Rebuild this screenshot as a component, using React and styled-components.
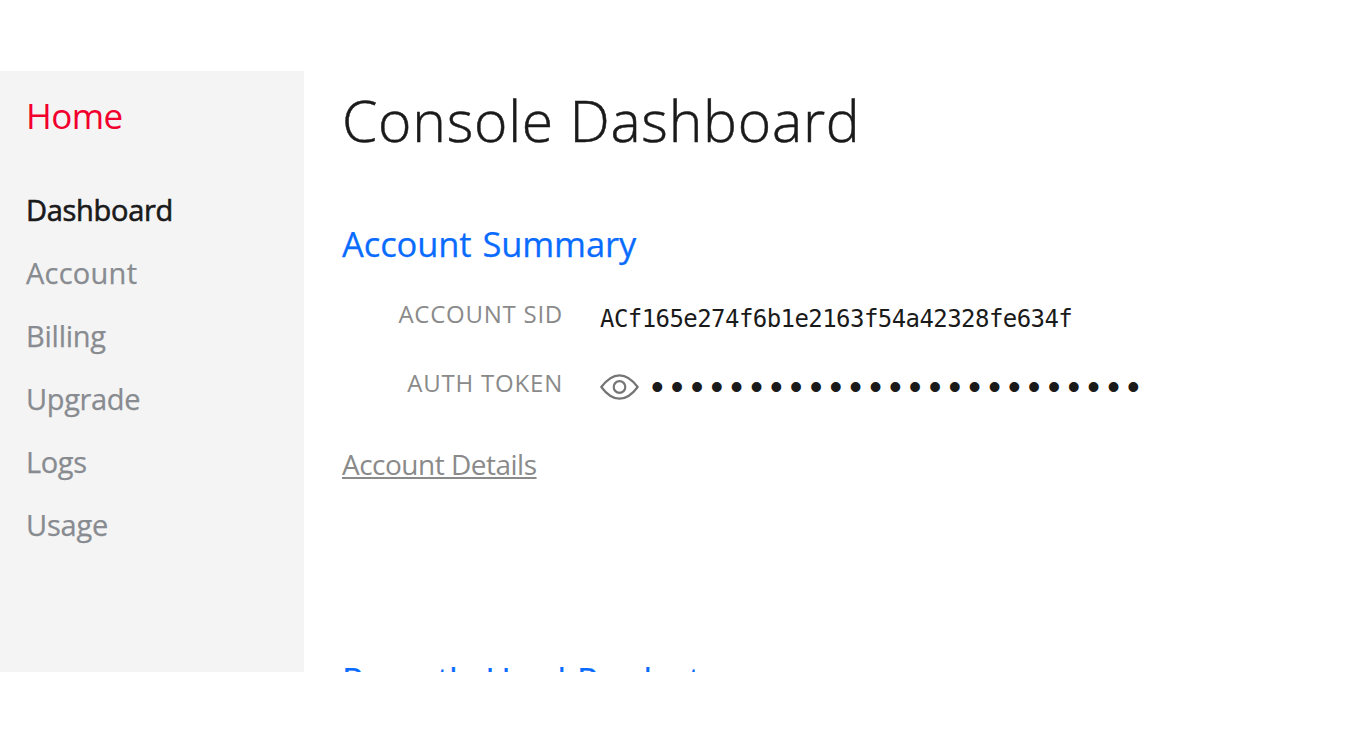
import React from "react";
import styled, { createGlobalStyle } from "styled-components";

const Global = createGlobalStyle`
  * { box-sizing: border-box; }
  body { margin: 0; background: #fff; font-family: "Open Sans", "Noto Sans", sans-serif; }
`;
const Page = styled.div`
  width: 1350px;
  height: 743px;
  padding: 71px 0;
  background: #fff;
  overflow: hidden;
`;
const Frame = styled.div`
  display: flex;
  height: 601px;
  overflow: hidden;
`;
const Sidebar = styled.aside`
  width: 304px;
  flex: none;
  padding: 25px 26px 0;
  background: #f4f4f4;
`;
const Line = styled.span`
  white-space: nowrap;
  letter-spacing: ${(p) => p.$track || 0}px;
  word-spacing: ${(p) => p.$word || 0}px;
`;
const Home = styled.div`
  height: 40px;
  line-height: 40px;
  font-size: 35px;
  color: #f2002d;
`;
const Nav = styled.nav`
  display: flex;
  flex-direction: column;
  margin-top: 42px;
`;
const NavItem = styled.a`
  height: 63px;
  line-height: 63px;
  font-size: 29px;
  color: ${(p) => (p.$active ? "#1a1a1a" : "#888b90")};
  -webkit-text-stroke: ${(p) => (p.$active ? "0.6px #1a1a1a" : "0.25px #888b90")};
`;
const Main = styled.main`
  flex: 1;
  padding: 14px 0 0 38px;
`;
const Title = styled.h1`
  margin: 0;
  height: 70px;
  line-height: 70px;
  font-size: 57px;
  font-weight: 300;
  color: #1a1a1a;
  -webkit-text-stroke: 0.5px #1a1a1a;
`;
const Heading = styled.h2`
  margin: ${(p) => p.$gap}px 0 0;
  height: 40px;
  line-height: 40px;
  font-size: 34.5px;
  font-weight: 400;
  color: #0a6cff;
  -webkit-text-stroke: 0.25px #0a6cff;
`;
const Fields = styled.dl`
  display: grid;
  grid-template-columns: 221px auto;
  column-gap: 37px;
  grid-auto-rows: 68.5px;
  margin: 17px 0 0;
`;
const Label = styled.dt`
  line-height: 66px;
  font-size: 24px;
  color: #8a8a8a;
  text-align: right;
`;
const Value = styled.dd`
  display: flex;
  align-items: center;
  height: 74px;
  margin: 0;
  color: #1a1a1a;
`;
const Mono = styled.span`
  padding-top: 2px;
  font-family: "DejaVu Sans Mono", monospace;
  font-size: 24px;
  letter-spacing: -0.56px;
`;
const Dots = styled.span`
  margin-left: 11px;
  font-family: "Liberation Sans", sans-serif;
  font-size: 36px;
  line-height: 40px;
  letter-spacing: 7.23px;
`;
const Details = styled.a`
  display: block;
  width: max-content;
  margin-top: 26px;
  height: 40px;
  line-height: 40px;
  font-size: 28px;
  color: #8a8a8a;
  text-decoration: underline;
  text-decoration-thickness: 2px;
  text-underline-offset: 2px;
`;

const EyeIcon = () => (
  <svg width="40" height="28" viewBox="0 0 40 28" fill="none" stroke="#757575" strokeWidth="2.2">
    <path d="M1.3 14C6.5 7 12.5 2.3 19.5 2.3S32.5 7 37.7 14C32.5 21 26.5 25.7 19.5 25.7S6.5 21 1.3 14Z" strokeLinejoin="round" />
    <circle cx="19.5" cy="14" r="5.8" />
  </svg>
);

const items = [
  ["Dashboard", -0.3],
  ["Account", 0.25],
  ["Billing", -0.25],
  ["Upgrade", -0.35],
  ["Logs", -0.4],
  ["Usage", -0.2],
];

export default function App() {
  return (
    <Page>
      <Global />
      <Frame>
        <Sidebar>
          <Home><Line $track={-0.6}>Home</Line></Home>
          <Nav>
            {items.map(([name, track], i) => (
              <NavItem key={name} $active={i === 0}><Line $track={track}>{name}</Line></NavItem>
            ))}
          </Nav>
        </Sidebar>
        <Main>
          <Title><Line $track={0.75}>Console Dashboard</Line></Title>
          <Heading $gap={69}><Line $track={-0.1} $word={2}>Account Summary</Line></Heading>
          <Fields>
            <Label><Line $track={0.75}>ACCOUNT SID</Line></Label>
            <Value><Mono>ACf165e274f6b1e2163f54a42328fe634f</Mono></Value>
            <Label><Line $track={0.8}>AUTH TOKEN</Line></Label>
            <Value><EyeIcon /><Dots>{"•".repeat(25)}</Dots></Value>
          </Fields>
          <Details><Line $track={-0.5}>Account Details</Line></Details>
          <Heading $gap={176}><Line $track={-0.5} $word={3}>Recently Used Products</Line></Heading>
        </Main>
      </Frame>
    </Page>
  );
}
